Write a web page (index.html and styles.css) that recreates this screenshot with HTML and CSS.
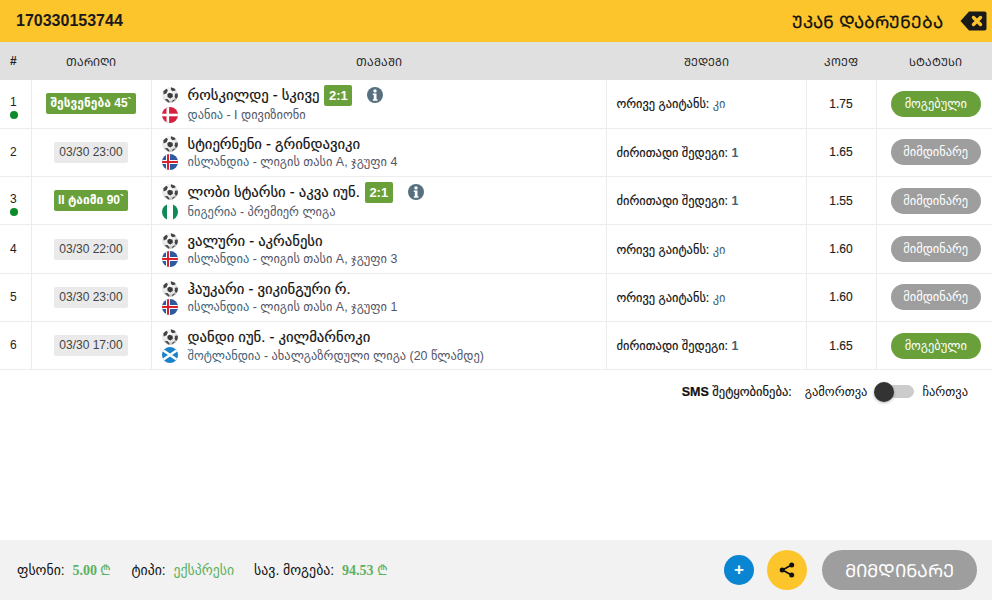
FILE: index.html
```html
<!DOCTYPE html>
<html lang="ka">
<head>
<meta charset="utf-8">
<title>170330153744</title>
<link rel="stylesheet" href="styles.css">
</head>
<body>
<svg class="defs" width="0" height="0" aria-hidden="true">
  <defs>
    <radialGradient id="ballfill" cx=".42" cy=".35" r=".75"><stop offset="0" stop-color="#fff"/><stop offset=".65" stop-color="#e4e4e4"/><stop offset="1" stop-color="#8c8c8c"/></radialGradient>
    <symbol id="ball" viewBox="0 0 16 16">
      <circle cx="8" cy="8" r="7.800" fill="url(#ballfill)"/>
      <path d="M7.500 5.800l3 1 .4 3-2.600 1.800-2.700-1.500-.2-3z" fill="#3a3a3a"/>
      <path d="M1.300 4.200L4.400 1.700l1.500 1.500-1.300 3L1.700 7.500zM9 .3l4 1.400.6 1.900-3.200 .6L8.800 2.500zM15.700 6.500l.1 3.500-1.700 2-1.500-2 .4-3.200zM2.700 12.300l2.700-.4 2 2.300-.6 1.600zM10.300 15.500l.3-2.300 2.600-.6z" fill="#444"/>
    </symbol>
    <clipPath id="round"><circle cx="8" cy="8" r="8"/></clipPath>
    <symbol id="dk" viewBox="0 0 16 16">
      <g clip-path="url(#round)"><rect width="16" height="16" fill="#d5203f"/><rect x="4.500" width="2.600" height="16" fill="#fff"/><rect y="6.700" width="16" height="2.600" fill="#fff"/></g>
    </symbol>
    <symbol id="is" viewBox="0 0 16 16">
      <g clip-path="url(#round)"><rect width="16" height="16" fill="#2d5aa0"/><rect x="4" width="4" height="16" fill="#fff"/><rect y="6" width="16" height="4" fill="#fff"/><rect x="5" width="2" height="16" fill="#d8202f"/><rect y="7" width="16" height="2" fill="#d8202f"/></g>
    </symbol>
    <symbol id="ng" viewBox="0 0 16 16">
      <g clip-path="url(#round)"><rect width="16" height="16" fill="#fff"/><rect width="5" height="16" fill="#0d8a57"/><rect x="11" width="5" height="16" fill="#0d8a57"/></g>
    </symbol>
    <symbol id="sc" viewBox="0 0 16 16">
      <g clip-path="url(#round)"><rect width="16" height="16" fill="#1a82c9"/><path d="M0 2.500L16 13.500M0 13.500L16 2.500" stroke="#fff" stroke-width="2.600"/></g>
    </symbol>
    <symbol id="info" viewBox="0 0 16 16">
      <circle cx="8" cy="8" r="8" fill="#56707f"/>
      <circle cx="8" cy="3.900" r="1.700" fill="#fff"/>
      <path d="M5.800 6.600h3.700v5.700h1v1.400H5.800v-1.400h1v-4.300h-1z" fill="#fff"/>
    </symbol>
  </defs>
</svg>

<header class="topbar">
  <div class="ticket-id">170330153744</div>
  <div class="back">
    <span>ᲣᲙᲐᲜ ᲓᲐᲑᲠᲣᲜᲔᲑᲐ</span>
    <svg class="back-icon" width="27" height="20" viewBox="0 0 27 20"><path d="M9 .5h15.500a2 2 0 0 1 2 2v15a2 2 0 0 1-2 2H9L.5 10z" fill="#1a1a1a"/><path d="M13.500 6.500l7 7M20.500 6.500l-7 7" stroke="#fdc52c" stroke-width="3.400" stroke-linecap="round"/></svg>
  </div>
</header>

<table class="matches">
  <thead>
    <tr>
      <th class="c-num">#</th>
      <th class="c-date">ᲗᲐᲠᲘᲦᲘ</th>
      <th class="c-game">ᲗᲐᲛᲐᲨᲘ</th>
      <th class="c-res">ᲨᲔᲓᲔᲒᲘ</th>
      <th class="c-odd">ᲙᲝᲔᲤ</th>
      <th class="c-stat">ᲡᲢᲐᲢᲣᲡᲘ</th>
    </tr>
  </thead>
  <tbody>
    <tr>
      <td class="num has-dot">1<i class="dot"></i></td>
      <td class="date"><span class="live">შესვენება 45`</span></td>
      <td class="game">
        <div class="game-line"><svg class="ico"><use href="#ball"/></svg><span class="teams">როსკილდე - სკივე</span><span class="score">2:1</span><svg class="info"><use href="#info"/></svg></div>
        <div class="game-line sub"><svg class="ico"><use href="#dk"/></svg><span><span class="league">დანია</span> - I დივიზიონი</span></div>
      </td>
      <td class="res">ორივე გაიტანს: <span class="pick">კი</span></td>
      <td class="odd">1.75</td>
      <td class="stat"><span class="pill won">მოგებული</span></td>
    </tr>
    <tr>
      <td class="num">2</td>
      <td class="date"><span class="time">03/30 23:00</span></td>
      <td class="game">
        <div class="game-line"><svg class="ico"><use href="#ball"/></svg><span class="teams">სტიერნენი - გრინდავიკი</span></div>
        <div class="game-line sub"><svg class="ico"><use href="#is"/></svg><span><span class="league">ისლანდია</span> - ლიგის თასი A, ჯგუფი 4</span></div>
      </td>
      <td class="res">ძირითადი შედეგი: <b class="pick">1</b></td>
      <td class="odd">1.65</td>
      <td class="stat"><span class="pill pending">მიმდინარე</span></td>
    </tr>
    <tr>
      <td class="num has-dot">3<i class="dot"></i></td>
      <td class="date"><span class="live">II ტაიმი 90`</span></td>
      <td class="game">
        <div class="game-line"><svg class="ico"><use href="#ball"/></svg><span class="teams">ლობი სტარსი - აკვა იუნ.</span><span class="score">2:1</span><svg class="info"><use href="#info"/></svg></div>
        <div class="game-line sub"><svg class="ico"><use href="#ng"/></svg><span><span class="league">ნიგერია</span> - პრემიერ ლიგა</span></div>
      </td>
      <td class="res">ძირითადი შედეგი: <b class="pick">1</b></td>
      <td class="odd">1.55</td>
      <td class="stat"><span class="pill pending">მიმდინარე</span></td>
    </tr>
    <tr>
      <td class="num">4</td>
      <td class="date"><span class="time">03/30 22:00</span></td>
      <td class="game">
        <div class="game-line"><svg class="ico"><use href="#ball"/></svg><span class="teams">ვალური - აკრანესი</span></div>
        <div class="game-line sub"><svg class="ico"><use href="#is"/></svg><span><span class="league">ისლანდია</span> - ლიგის თასი A, ჯგუფი 3</span></div>
      </td>
      <td class="res">ორივე გაიტანს: <span class="pick">კი</span></td>
      <td class="odd">1.60</td>
      <td class="stat"><span class="pill pending">მიმდინარე</span></td>
    </tr>
    <tr>
      <td class="num">5</td>
      <td class="date"><span class="time">03/30 23:00</span></td>
      <td class="game">
        <div class="game-line"><svg class="ico"><use href="#ball"/></svg><span class="teams">ჰაუკარი - ვიკინგური რ.</span></div>
        <div class="game-line sub"><svg class="ico"><use href="#is"/></svg><span><span class="league">ისლანდია</span> - ლიგის თასი A, ჯგუფი 1</span></div>
      </td>
      <td class="res">ორივე გაიტანს: <span class="pick">კი</span></td>
      <td class="odd">1.60</td>
      <td class="stat"><span class="pill pending">მიმდინარე</span></td>
    </tr>
    <tr>
      <td class="num">6</td>
      <td class="date"><span class="time">03/30 17:00</span></td>
      <td class="game">
        <div class="game-line"><svg class="ico"><use href="#ball"/></svg><span class="teams">დანდი იუნ. - კილმარნოკი</span></div>
        <div class="game-line sub"><svg class="ico"><use href="#sc"/></svg><span><span class="league">შოტლანდია</span> - ახალგაზრდული ლიგა (20 წლამდე)</span></div>
      </td>
      <td class="res">ძირითადი შედეგი: <b class="pick">1</b></td>
      <td class="odd">1.65</td>
      <td class="stat"><span class="pill won">მოგებული</span></td>
    </tr>
  </tbody>
</table>

<div class="sms">
  <span class="sms-label"><b>SMS</b> შეტყობინება:</span>
  <span class="sms-off">გამორთვა</span>
  <span class="switch"><span class="knob"></span></span>
  <span>ჩართვა</span>
</div>

<footer class="bottombar">
  <div class="summary">
    <span class="item">ფსონი: <b class="val num-val">5.00 <span class="lari">₾</span></b></span>
    <span class="item">ტიპი: <span class="val">ექსპრესი</span></span>
    <span class="item">სავ. მოგება: <b class="val num-val">94.53 <span class="lari">₾</span></b></span>
  </div>
  <div class="actions">
    <span class="btn-plus">+</span>
    <span class="btn-share">
      <svg width="16" height="16" viewBox="0 0 16 16"><path d="M12.500 3L3.500 8l9 5" fill="none" stroke="#111" stroke-width="1.800"/><circle cx="12.700" cy="2.900" r="2.500" fill="#111"/><circle cx="3.200" cy="8" r="2.500" fill="#111"/><circle cx="12.700" cy="13.100" r="2.500" fill="#111"/></svg>
    </span>
    <span class="btn-state">ᲛᲘᲛᲓᲘᲜᲐᲠᲔ</span>
  </div>
</footer>
</body>
</html>
```

FILE: styles.css
```css
* { box-sizing: border-box; }
html, body { height: 100%; }
body {
  margin: 0;
  height: 600px;
  display: flex;
  flex-direction: column;
  overflow: hidden;
  background: #fff;
  color: #222;
  font-family: "Liberation Sans", "DejaVu Sans", sans-serif;
  font-size: 12.400px;
}
.defs { position: absolute; }

.topbar {
  height: 42px;
  flex: none;
  background: #fdc52c;
  display: flex;
  align-items: center;
  justify-content: space-between;
  padding: 0 5px 0 16px;
}
.ticket-id { font-size: 16px; font-weight: 700; color: #1a1a1a; }
.back { display: flex; align-items: center; gap: 17px; font-size: 17px; color: #111; -webkit-text-stroke: .25px #111; }
.back-icon { display: block; }

.matches { width: 992px; border-collapse: collapse; table-layout: fixed; flex: none; }
.matches th {
  height: 38px;
  background: #e0e0e0;
  font-weight: 400;
  font-size: 11px;
  color: #222;
  padding: 0;
  text-align: center;
}
th.c-num { width: 31px; font-weight: 700; font-size: 12px; text-align: left; padding-left: 10px; }
th.c-date { width: 120px; }
th.c-game { width: 455px; }
th.c-res { width: 200px; }
th.c-odd { width: 70px; }
.matches th.c-stat { padding-left: 3px; }
.matches td {
  height: 48.330px;
  padding: 0;
  border: 1px solid #ececec;
  border-top: 0;
  vertical-align: middle;
  text-align: center;
}
.matches td:first-child { border-left: 0; }
.matches td:last-child { border-right: 0; }
.matches td.num { font-size: 12px; text-align: left; padding-left: 10px; line-height: 13px; }
.matches td.has-dot { padding-top: 8px; }
.dot { display: block; width: 8px; height: 8px; border-radius: 50%; background: #0d8a2a; margin-top: 2px; }
.live {
  display: inline-block;
  background: #69a03a;
  color: #fff;
  font-weight: 700;
  font-size: 12px;
  padding: 0 4px;
  line-height: 21px;
  border-radius: 2px;
}
.time {
  display: inline-block;
  background: #eaeaea;
  color: #444;
  font-size: 12px;
  padding: 0 5px;
  line-height: 21px;
  border-radius: 2px;
}
.matches td.game { text-align: left; padding: 1px 0 0 10px; }
.game-line { display: flex; align-items: center; min-height: 18px; }
.ico { width: 16px; height: 16px; margin-right: 10px; flex: none; }
.teams { font-size: 14.700px; line-height: 18px; color: #111; -webkit-text-stroke: .2px #111; }
.sub { color: #556; }
.league { color: #3f6478; }
.score {
  background: #69a03a;
  color: #fff;
  font-weight: 700;
  font-size: 13px;
  width: 28px;
  line-height: 21px;
  text-align: center;
  border-radius: 2px;
  margin-left: 5px;
}
.info { width: 16px; height: 16px; margin-left: 15px; }
.matches td.res { text-align: left; padding-left: 10px; color: #111; -webkit-text-stroke: .15px #111; }
.pick { color: #3f6478; -webkit-text-stroke: 0; }
td.odd { color: #222; font-size: 12px; -webkit-text-stroke: .15px #222; }
.matches td.stat { padding-left: 3px; }
.pill {
  display: inline-block;
  width: 90px;
  line-height: 26px;
  border-radius: 13px;
  color: #fff;
  text-align: center;
}
.won { background: #69a03a; }
.pending { background: #9e9e9e; }

.sms {
  display: flex;
  align-items: center;
  justify-content: flex-end;
  height: 42px;
  padding-right: 24px;
  color: #111;
  font-size: 12.500px;
  flex: none;
}
.sms-label { margin-right: 13px; -webkit-text-stroke: .2px #111; }
.sms-off { margin-right: 9px; }
.switch { position: relative; width: 38px; height: 13px; background: #ccc; border-radius: 7px; margin-right: 8px; }
.knob { position: absolute; left: -2px; top: -3px; width: 20px; height: 20px; border-radius: 50%; background: #333; box-shadow: 0 1px 3px rgba(0,0,0,.3); }

.bottombar {
  margin-top: auto;
  height: 60px;
  flex: none;
  background: #f2f2f2;
  display: flex;
  align-items: center;
  justify-content: space-between;
  padding: 0 15px 0 17px;
}
.summary { display: flex; align-items: baseline; gap: 20px; font-size: 13.800px; color: #111; margin-bottom: 2px; }
.val { color: #5cb160; margin-left: 4px; }
.num-val { font-family: "Liberation Serif", serif; font-size: 14px; font-weight: 700; }
.lari { font-weight: 400; }
.actions { display: flex; align-items: center; gap: 13px; }
.btn-plus {
  width: 30px; height: 30px; border-radius: 50%;
  background: #0a85d1; color: #fff; font-size: 17px; font-weight: 700;
  display: flex; align-items: center; justify-content: center;
}
.btn-share {
  width: 40px; height: 40px; border-radius: 50%;
  background: #fdc52c;
  display: flex; align-items: center; justify-content: center;
  margin-right: 2px;
}
.btn-state {
  width: 155px; height: 40px; border-radius: 20px;
  background: #9e9e9e; color: #fff; font-size: 18px;
  display: flex; align-items: center; justify-content: center;
}
```
